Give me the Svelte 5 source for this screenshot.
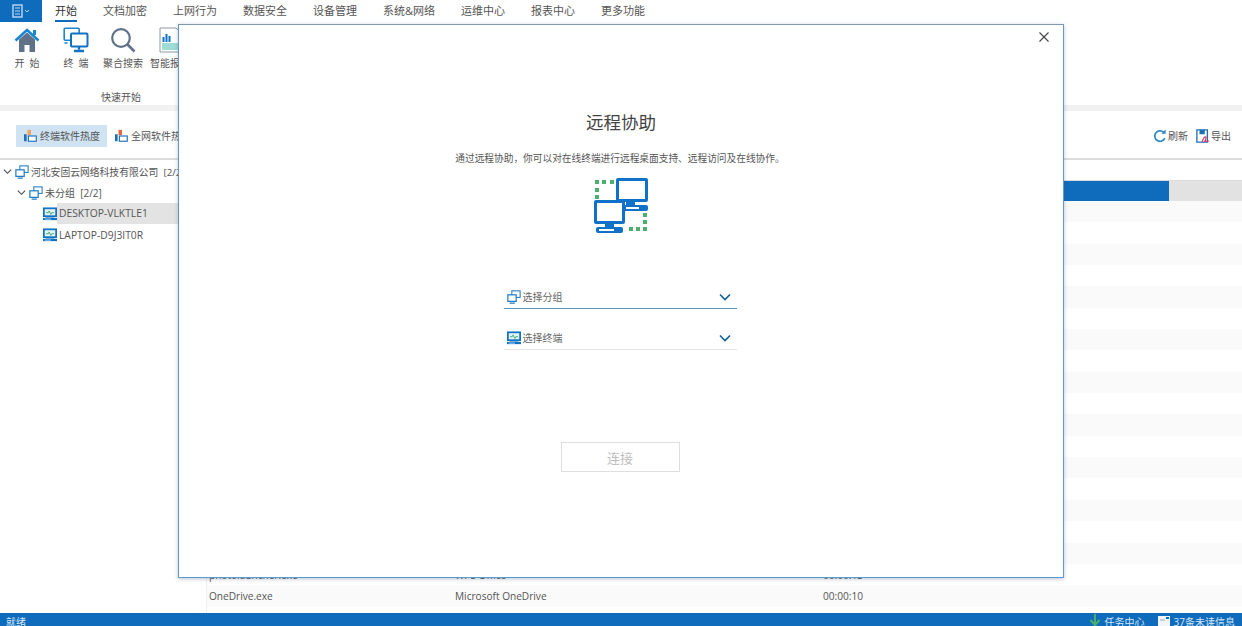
<script>
  const tabs = ['开始', '文档加密', '上网行为', '数据安全', '设备管理', '系统&网络', '运维中心', '报表中心', '更多功能'];
  const stripes = Array.from({ length: 19 }, (_, i) => i);
  const cells = { 17: ['photolauncher.exe', 'WPS Office', '00:00:13'], 18: ['OneDrive.exe', 'Microsoft OneDrive', '00:00:10'] };
</script>

{#snippet monitor()}
  <svg class="ico14" viewBox="0 0 16 16">
    <rect x="1" y="1.500" width="14" height="9" fill="#e4f4f4" stroke="#0f72c4" stroke-width="2"/>
    <path d="M3.500 6.500h2.500l1-2 2 4 1-2h2.500" fill="none" stroke="#2fa36b" stroke-width="1"/>
    <rect x="3" y="11" width="10" height="1" fill="#0f72c4"/>
    <rect x="0" y="12.500" width="16" height="2.500" fill="#0f72c4"/>
    <rect x="2" y="13.300" width="7" height="1" fill="#bfe0f5"/>
  </svg>
{/snippet}

{#snippet groupIcon()}
  <svg class="ico14" viewBox="0 0 16 16">
    <rect x="5.500" y="1" width="9.500" height="7.500" fill="#fff" stroke="#1f7cc7" stroke-width="1.200"/>
    <rect x="1" y="5.500" width="9.500" height="7.500" fill="#fff" stroke="#1f7cc7" stroke-width="1.400"/>
    <path d="M3 15h6" stroke="#1f7cc7" stroke-width="1.400"/>
  </svg>
{/snippet}

<div class="page">
  <nav class="menubar">
    <div class="appbtn">
      <svg width="18" height="14" viewBox="0 0 18 14">
        <rect x="1" y="1" width="9" height="12" fill="none" stroke="#bcd9f2" stroke-width="1.400"/>
        <path d="M3 4h5M3 7h5M3 10h5" stroke="#bcd9f2"/>
        <path d="M13 6l2 2 2-2" fill="none" stroke="#bcd9f2"/>
      </svg>
    </div>
    <div class="tabs">
      {#each tabs as t, i}
        <span class="tab" class:active={i === 0}>{t}</span>
      {/each}
    </div>
  </nav>

  <section class="ribbon">
    <div class="ribbon-items">
      <div class="rb rb1">
        <svg width="26" height="26" viewBox="0 0 26 26">
          <path d="M5 12.500 13 5.500l8 7V25h-5.500v-7h-5v7H5z" fill="#5f7287"/>
          <path d="M1.500 13.500 13 3l11.500 10.500" fill="none" stroke="#1a86d0" stroke-width="2.600"/>
          <rect x="19" y="3" width="3" height="5" fill="#1a86d0"/>
        </svg>
        <span class="spaced">开  始</span>
      </div>
      <div class="rb rb2">
        <svg width="26" height="26" viewBox="0 0 26 26">
          <rect x="1.200" y="1.200" width="15" height="12" rx="1" fill="#fff" stroke="#1a86d0" stroke-width="1.600"/>
          <rect x="8" y="6.500" width="16.500" height="13" rx="1" fill="#fff" stroke="#0f72c4" stroke-width="2"/>
          <path d="M16 19.500v3M11 24h10" stroke="#0f72c4" stroke-width="2.400"/>
          <path d="M1.500 16h3" stroke="#1a86d0" stroke-width="1.600"/>
        </svg>
        <span class="spaced">终  端</span>
      </div>
      <div class="rb rb3">
        <svg width="26" height="26" viewBox="0 0 26 26">
          <circle cx="11" cy="11" r="8.800" fill="none" stroke="#5f7287" stroke-width="2.200"/>
          <path d="M17.500 17.500 24.500 24.500" stroke="#5f7287" stroke-width="2.600"/>
        </svg>
        <span>聚合搜索</span>
      </div>
      <div class="rb rb4">
        <svg width="26" height="26" viewBox="0 0 26 26">
          <path d="M3 1h16l7 7v17H3z" fill="#fff" stroke="#8c9aa6"/>
          <path d="M6.500 10v5M9.500 7v8M12.500 9v6" stroke="#0f72c4" stroke-width="2"/>
          <rect x="5" y="16" width="18" height="7" fill="#9fdcd6"/>
        </svg>
        <span>智能报表</span>
      </div>
    </div>
    <div class="ribbon-title">快速开始</div>
  </section>

  <div class="band"></div>

  <section class="toolbar">
    <div class="tool on">
      <svg class="ico14" viewBox="0 0 16 16">
        <rect x="0" y="6" width="3" height="8" fill="#1f6fb5"/>
        <rect x="4" y="1" width="4" height="6" fill="#f0a35e"/>
        <rect x="5" y="8" width="9" height="6" fill="#fff" stroke="#1f6fb5" stroke-width="1.300"/>
      </svg>
      <span>终端软件热度</span>
    </div>
    <div class="tool second">
      <svg class="ico14" viewBox="0 0 16 16">
        <rect x="0" y="6" width="3" height="8" fill="#1f6fb5"/>
        <rect x="4" y="1" width="4" height="6" fill="#e8663c"/>
        <rect x="5" y="8" width="9" height="6" fill="#fff" stroke="#1f6fb5" stroke-width="1.300"/>
      </svg>
      <span>全网软件热度</span>
    </div>
    <div class="tools-right">
      <span class="act">
        <svg class="ico14" viewBox="0 0 16 16">
          <path d="M13.500 10.500A6 6 0 1 1 12 3.500" fill="none" stroke="#2f87c6" stroke-width="2"/>
          <path d="M14.500 0.500v5h-5z" fill="#2f87c6"/>
        </svg>
        <span>刷新</span>
      </span>
      <span class="act">
        <svg class="ico14" viewBox="0 0 16 16">
          <path d="M1 1h12v14H1z" fill="#fff" stroke="#1f6fb5" stroke-width="1.500"/>
          <rect x="4" y="1" width="6" height="5" fill="#1f6fb5"/>
          <path d="M7 15c1-4 3-6 4-6s0 4-1 5 4-1 5 0" fill="none" stroke="#e0395a" stroke-width="1.300"/>
        </svg>
        <span>导出</span>
      </span>
    </div>
  </section>

  <main class="body">
    <aside class="tree">
      <div class="node lv0">
        <svg class="chev" viewBox="0 0 10 10"><path d="M1 3l4 4 4-4" fill="none" stroke="#444" stroke-width="1.200"/></svg>
        {@render groupIcon()}
        <span>河北安固云网络科技有限公司&nbsp; [2/2]</span>
      </div>
      <div class="node lv1">
        <svg class="chev" viewBox="0 0 10 10"><path d="M1 3l4 4 4-4" fill="none" stroke="#444" stroke-width="1.200"/></svg>
        {@render groupIcon()}
        <span>未分组&nbsp; [2/2]</span>
      </div>
      <div class="node lv2">
        {@render monitor()}
        <span class="sel">DESKTOP-VLKTLE1</span>
      </div>
      <div class="node lv2">
        {@render monitor()}
        <span class="plain">LAPTOP-D9J3IT0R</span>
      </div>
    </aside>
    <div class="table">
      <div class="thead"></div>
      <div class="bar-row"><div class="bar-fill"></div></div>
      {#each stripes as s}
        <div class="row" class:shade={s % 2 === 0}>
          {#if cells[s]}
            <span class="c1">{cells[s][0]}</span>
            <span class="c2">{cells[s][1]}</span>
            <span class="c3">{cells[s][2]}</span>
          {/if}
        </div>
      {/each}
    </div>
  </main>

  <footer class="status">
    <span>就绪</span>
    <div class="status-right">
      <span class="st">
        <svg width="12" height="13" viewBox="0 0 12 13"><path d="M6 0v10M1.500 6 6 11l4.500-5" fill="none" stroke="#4cae6a" stroke-width="2"/></svg>
        <span>任务中心</span>
      </span>
      <span class="st">
        <svg width="12" height="13" viewBox="0 0 12 13"><rect x="0" y="2" width="12" height="10" fill="#f2f6fa"/><rect x="8" y="3" width="3" height="2" fill="#0f6cbd"/><path d="M2 6h5" stroke="#9ab"/></svg>
        <span>37条未读信息</span>
      </span>
    </div>
  </footer>

  <div class="dialog">
    <button class="close" aria-label="关闭">
      <svg width="10" height="10" viewBox="0 0 10 10"><path d="M.5.500l9 9M9.500.500l-9 9" stroke="#444" stroke-width="1.100"/></svg>
    </button>
    <h1>远程协助</h1>
    <p>通过远程协助，你可以对在线终端进行远程桌面支持、远程访问及在线协作。</p>
    <svg class="hero" width="56" height="58" viewBox="0 0 56 58">
      <g fill="#4caf6e">
        <rect x="2" y="3" width="4" height="4"/><rect x="9" y="3" width="4" height="4"/><rect x="17" y="3" width="4" height="4"/>
        <rect x="2" y="11" width="4" height="4"/><rect x="2" y="18" width="4" height="4"/>
        <rect x="50" y="36" width="4" height="4"/><rect x="50" y="43" width="4" height="4"/><rect x="50" y="50" width="4" height="4"/>
        <rect x="36" y="50" width="4" height="4"/><rect x="43" y="50" width="4" height="4"/>
      </g>
      <g fill="#0f72c8">
        <path fill-rule="evenodd" d="M25 1h28a2 2 0 0 1 2 2v20a2 2 0 0 1-2 2H25a2 2 0 0 1-2-2V3a2 2 0 0 1 2-2zm1 3v18h26V4z"/>
        <rect x="33" y="25" width="9" height="3"/>
        <rect x="29" y="28" width="26" height="6" rx="2"/>
        <path fill-rule="evenodd" d="M3 23h27a2 2 0 0 1 2 2v20a2 2 0 0 1-2 2H3a2 2 0 0 1-2-2V25a2 2 0 0 1 2-2zm1 3v18h25V26z"/>
        <rect x="12" y="47" width="9" height="3"/>
        <rect x="3" y="50" width="27" height="6" rx="2"/>
      </g>
      <rect x="6" y="52" width="15" height="2" fill="#fff"/>
      <rect x="33" y="30" width="13" height="2" fill="#fff"/>
    </svg>
    <div class="select focus">
      {@render groupIcon()}
      <span>选择分组</span>
      <svg class="arrow" width="12" height="8" viewBox="0 0 12 8"><path d="M1 1.500l5 5 5-5" fill="none" stroke="#0f5f96" stroke-width="1.600"/></svg>
    </div>
    <div class="select">
      {@render monitor()}
      <span>选择终端</span>
      <svg class="arrow" width="12" height="8" viewBox="0 0 12 8"><path d="M1 1.500l5 5 5-5" fill="none" stroke="#0f5f96" stroke-width="1.600"/></svg>
    </div>
    <button class="connect" disabled>连接</button>
  </div>
</div>

<style>
  :global(body) { margin: 0; background: #fff; }
  .page {
    position: relative;
    width: 1242px;
    height: 626px;
    overflow: hidden;
    display: flex;
    flex-direction: column;
    font-family: "Open Sans", "Noto Sans CJK SC", sans-serif;
    font-size: 10px;
    color: #555;
  }
  .ico14 { width: 14px; height: 14px; flex: none; }

  .menubar { display: flex; height: 22px; flex: none; }
  .appbtn {
    width: 42px;
    background: #0f6cbd;
    display: flex;
    align-items: center;
    justify-content: center;
  }
  .tabs { display: flex; gap: 26px; margin-left: 13px; }
  .tab {
    font-size: 11px;
    line-height: 22px;
    height: 22px;
    box-sizing: border-box;
    color: #555;
    white-space: nowrap;
  }
  .tab.active { color: #333; border-bottom: 2px solid #0f6cbd; }

  .ribbon { height: 83px; flex: none; }
  .ribbon-items { display: flex; padding-top: 5px; padding-left: 5px; }
  .rb {
    display: flex;
    flex-direction: column;
    align-items: center;
    gap: 3px;
    white-space: nowrap;
    line-height: 14px;
    color: #555;
  }
  .rb1 { width: 44px; }
  .rb2 { width: 54px; }
  .rb3 { width: 40px; margin-right: 7px; }
  .rb4 { width: 40px; }
  .spaced { white-space: pre; }
  .ribbon-title { text-align: center; width: 242px; line-height: 14px; margin-top: 20px; }

  .band { height: 6px; flex: none; background: #f1f1f1; }

  .toolbar {
    height: 49px;
    flex: none;
    display: flex;
    align-items: flex-start;
    padding: 14px 11px 0 16px;
    border-bottom: 2px solid #dcdcdc;
    box-sizing: border-box;
  }
  .tool {
    height: 22px;
    padding: 0 7px 0 8px;
    display: flex;
    align-items: center;
    gap: 2px;
    white-space: nowrap;
  }
  .tool span { padding-bottom: 2px; }
  .tool.on { background: #cfe3f3; }
  .tool.second { margin-left: 7px; padding-left: 1px; }
  .tools-right { margin-left: auto; display: flex; gap: 8px; padding-top: 3px; }
  .act { display: flex; align-items: center; gap: 1px; }
  .act span { padding-bottom: 1px; }

  .body { flex: 1; display: flex; min-height: 0; }
  .tree { width: 206px; flex: none; border-right: 1px solid #efefef; padding-top: 1px; }
  .node {
    height: 21px;
    display: flex;
    align-items: center;
    gap: 2px;
    white-space: nowrap;
    overflow: hidden;
    color: #555;
  }
  .lv0 { padding-left: 3px; font-size: 9.800px; }
  .lv1 { padding-left: 17px; }
  .lv2 { padding-left: 43px; gap: 0; }
  .chev { width: 9px; height: 9px; flex: none; margin-right: 1px; }
  .sel {
    flex: 1;
    line-height: 21px;
    background: #e3e3e3;
    padding-left: 2px;
    font-size: 10.300px;
  }
  .plain { padding-left: 2px; font-size: 10.300px; }

  .table { flex: 1; display: flex; flex-direction: column; }
  .thead { height: 21px; flex: none; box-sizing: border-box; border-bottom: 1px solid #dcdcdc; }
  .bar-row { height: 20px; flex: none; background: #e2e2e2; }
  .bar-fill { width: 962px; height: 100%; background: #0f6cbd; }
  .row {
    height: 21.350px;
    flex: none;
    display: flex;
    align-items: center;
    font-size: 10.100px;
    color: #555;
  }
  .row.shade { background: #fafafa; }
  .c1 { width: 248px; padding-left: 2px; box-sizing: border-box; }
  .c2 { width: 368px; }

  .status {
    height: 13px;
    flex: none;
    background: #0f6cbd;
    color: #d6e8f7;
    display: flex;
    line-height: 18px;
    padding: 0 7px 0 6px;
    overflow: hidden;
    white-space: nowrap;
  }
  .status-right { margin-left: auto; display: flex; gap: 13px; }
  .st { display: flex; gap: 4px; }
  .st svg { margin-top: 1px; }

  .dialog {
    position: absolute;
    left: 178px;
    top: 24px;
    width: 886px;
    height: 554px;
    box-sizing: border-box;
    padding-right: 2px;
    background: #fff;
    border: 1px solid #5a9bd0;
    border-top-color: #7f98ab;
    box-shadow: 0 1px 4px rgba(60, 90, 120, .35);
    display: flex;
    flex-direction: column;
    align-items: center;
  }
  .close {
    position: absolute;
    right: 13px;
    top: 6px;
    width: 12px;
    height: 12px;
    padding: 0;
    background: none;
    border: 0;
    display: flex;
    align-items: center;
    justify-content: center;
  }
  h1 {
    margin: 83px 0 0 2px;
    font-size: 17.500px;
    font-weight: 400;
    line-height: 28px;
    color: #444;
  }
  p {
    margin: 15px 0 0;
    font-size: 9.700px;
    line-height: 16px;
    color: #555;
  }
  .hero { margin-top: 10px; flex: none; margin-left: 1px; }
  .select {
    width: 233px;
    height: 19px;
    flex: none;
    box-sizing: content-box;
    padding-bottom: 2px;
    display: flex;
    align-items: center;
    gap: 2px;
    border-bottom: 1px solid #e6e6e6;
    margin-top: 19px;
    color: #666;
  }
  .select .ico14 { margin-left: 3px; }
  .select.focus { border-bottom-color: #5f93b8; margin-top: 52px; }
  .arrow { margin-left: auto; margin-right: 6px; }
  .connect {
    margin-top: 92px;
    width: 119px;
    height: 30px;
    background: #fff;
    border: 1px solid #dedede;
    font-family: inherit;
    font-size: 13px;
    color: #bdbdbd;
    padding: 0;
  }
</style>
